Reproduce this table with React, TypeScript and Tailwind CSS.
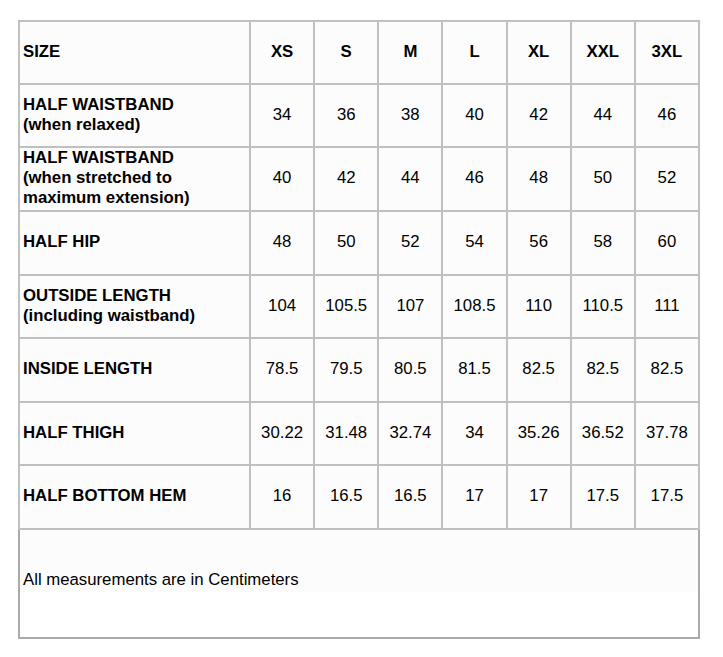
import React from "react"

const sizes = ["XS", "S", "M", "L", "XL", "XXL", "3XL"]

const rows: { label: string[]; values: string[]; h: string }[] = [
  { label: ["HALF WAISTBAND", "(when relaxed)"], values: ["34", "36", "38", "40", "42", "44", "46"], h: "h-[61px]" },
  {
    label: ["HALF WAISTBAND", "(when stretched to", "maximum extension)"],
    values: ["40", "42", "44", "46", "48", "50", "52"],
    h: "h-[62px]",
  },
  { label: ["HALF HIP"], values: ["48", "50", "52", "54", "56", "58", "60"], h: "h-[62px]" },
  {
    label: ["OUTSIDE LENGTH", "(including waistband)"],
    values: ["104", "105.5", "107", "108.5", "110", "110.5", "111"],
    h: "h-[61px]",
  },
  { label: ["INSIDE LENGTH"], values: ["78.5", "79.5", "80.5", "81.5", "82.5", "82.5", "82.5"], h: "h-[62px]" },
  {
    label: ["HALF THIGH"],
    values: ["30.22", "31.48", "32.74", "34", "35.26", "36.52", "37.78"],
    h: "h-[61px]",
  },
  { label: ["HALF BOTTOM HEM"], values: ["16", "16.5", "16.5", "17", "17", "17.5", "17.5"], h: "h-[62px]" },
]

export default function App() {
  return (
    <div className="min-h-screen bg-white pt-[20px] pl-[18px] font-['Liberation_Sans',Arial,sans-serif] text-[16.75px] leading-[20px] text-black">
      <div className="w-[682px]">
        {/* Size table */}
        <div className="grid grid-cols-[229px_repeat(7,1fr)] gap-[2px] border-2 border-[#c0c0c0] bg-[#c0c0c0]">
          <div className="flex h-[61px] items-center bg-[#fcfcfc] pl-[3px] pb-[2px] font-bold">SIZE</div>
          {sizes.map((s) => (
            <div key={s} className="flex h-[61px] items-center justify-center bg-[#fcfcfc] pb-[2px] font-bold">
              {s}
            </div>
          ))}
          {rows.map((row, i) => (
            <React.Fragment key={i}>
              <div className={`flex flex-col justify-center bg-[#fcfcfc] pl-[3px] pb-[2px] font-bold ${row.h}`}>
                {row.label.map((l) => (
                  <span key={l}>{l}</span>
                ))}
              </div>
              {row.values.map((v, j) => (
                <div key={j} className={`flex items-center justify-center bg-[#fcfcfc] pb-[2px] ${row.h}`}>
                  {v}
                </div>
              ))}
            </React.Fragment>
          ))}
        </div>

        {/* Note */}
        <div className="border-2 border-t-0 border-[#aaaaaa]">
          <div className="h-[62px] bg-[#fcfcfc] pl-[3px] pt-[40px]">All measurements are in Centimeters</div>
          <div className="h-[45px] bg-white" />
        </div>
      </div>
    </div>
  )
}
